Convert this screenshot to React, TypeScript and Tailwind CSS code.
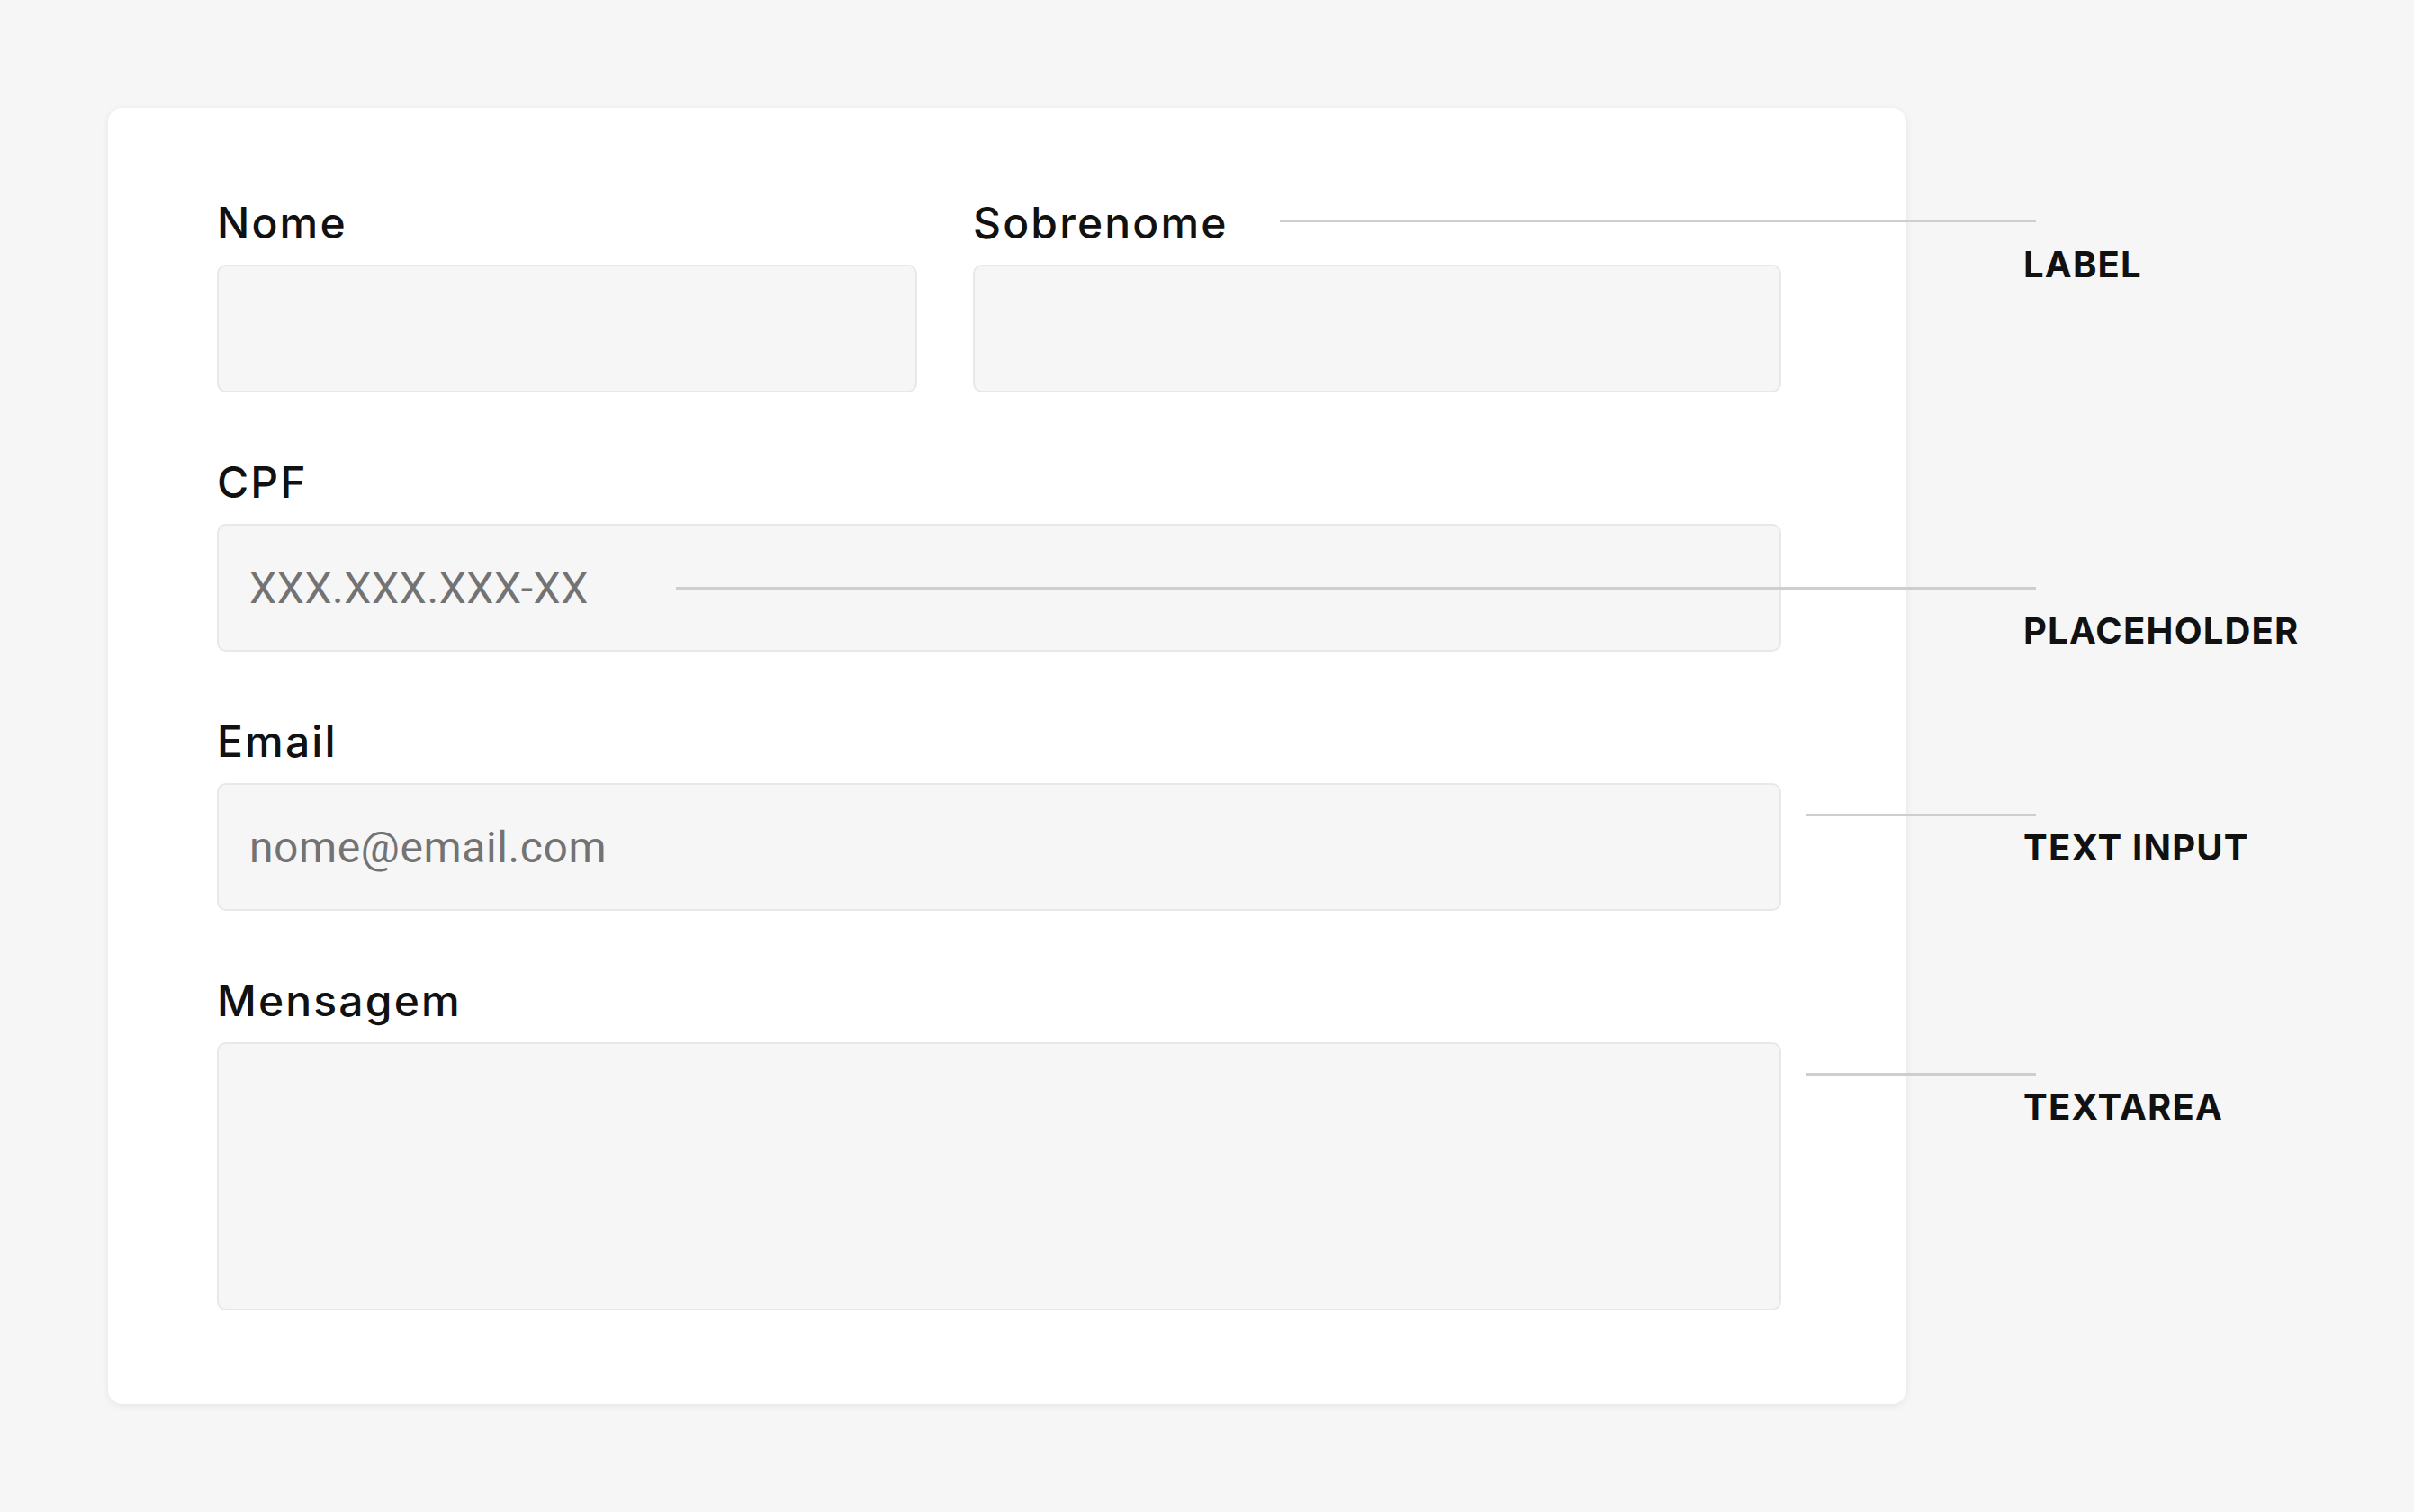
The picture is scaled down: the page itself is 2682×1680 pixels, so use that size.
import type { ReactNode } from 'react';

const labelFont = { fontFamily: 'Inter, "Noto Sans", sans-serif' };

interface FieldProps {
  label: string;
  placeholder?: string;
  multiline?: boolean;
}

function Field({ label, placeholder, multiline }: FieldProps) {
  const box =
    'w-full rounded-[10px] border-2 border-[#e8e8e8] bg-[#f6f6f6] pl-[34px] text-[48px] tracking-[0.6px] text-[#111] outline-none placeholder:text-[#737373] font-["Roboto",sans-serif]';

  return (
    <div className="flex flex-col">
      <label
        className="mb-[22px] h-[48px] text-[48px] leading-none font-medium tracking-[0.045em] text-[#111]"
        style={labelFont}
      >
        {label}
      </label>
      {multiline ? (
        <textarea className={`${box} h-[298px] resize-none pt-[30px]`} />
      ) : (
        <input className={`${box} h-[142px]`} placeholder={placeholder} />
      )}
    </div>
  );
}

// annotation: leader line + caption in the right margin
function Note({ top, lineTop, lineLeft, children }: { top: number; lineTop: number; lineLeft: number; children: ReactNode }) {
  return (
    <>
      <div
        className="absolute h-[3px] bg-[#cecece]"
        style={{ top: lineTop - 1, left: lineLeft, width: 2262 - lineLeft }}
      />
      <div
        className="absolute left-[2248px] text-[40px] leading-none font-bold tracking-[0.03em] text-[#111]"
        style={{ ...labelFont, top }}
      >
        {children}
      </div>
    </>
  );
}

export default function App() {
  return (
    <div className="relative h-[1680px] w-[2682px] overflow-hidden bg-[#f6f6f6] pl-[120px] pt-[120px]">
      {/* Form card */}
      <div className="flex w-[1998px] flex-col gap-[76px] rounded-[16px] bg-white pt-[104px] pb-[104px] pl-[121px] shadow-[0_2px_8px_rgba(0,0,0,0.07)]">
        <div className="grid grid-cols-[778px_898px] gap-[62px]">
          <Field label="Nome" />
          <Field label="Sobrenome" />
        </div>
        <div className="w-[1738px]">
          <Field label="CPF" placeholder="XXX.XXX.XXX-XX" />
        </div>
        <div className="w-[1738px]">
          <Field label="Email" placeholder="nome@email.com" />
        </div>
        <div className="w-[1738px]">
          <Field label="Mensagem" multiline />
        </div>
      </div>

      <Note top={274} lineTop={245} lineLeft={1422}>LABEL</Note>
      <Note top={681} lineTop={653} lineLeft={751}>PLACEHOLDER</Note>
      <Note top={922} lineTop={905} lineLeft={2007}>TEXT INPUT</Note>
      <Note top={1210} lineTop={1193} lineLeft={2007}>TEXTAREA</Note>
    </div>
  );
}
